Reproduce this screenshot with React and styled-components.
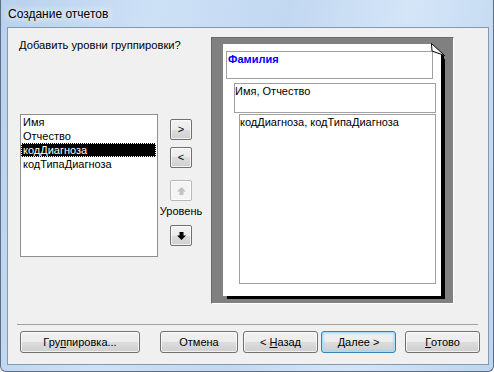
import styled, { createGlobalStyle } from "styled-components";

const GlobalStyle = createGlobalStyle`
  html, body {
    margin: 0;
    padding: 0;
    background: #fff;
  }
  body {
    font-family: "Liberation Sans", Arial, sans-serif;
  }
`;

const Window = styled.div`
  box-sizing: border-box;
  width: 494px;
  height: 372px;
  display: flex;
  flex-direction: column;
  border: 1px solid #5d6d84;
  border-top: none;
  border-radius: 0 0 6px 6px;
  padding: 0 4px 6px 6px;
  background: linear-gradient(
    100deg,
    #b8d1ec 0%,
    #cde1f6 28%,
    #c2d8f1 52%,
    #d4e5f7 74%,
    #bdd5ef 100%
  );
`;

const TitleBar = styled.div`
  height: 27px;
  display: flex;
  align-items: center;
  padding-left: 1px;
  font-size: 12px;
  color: #000;
  text-shadow: 0 0 6px #fff, 0 0 10px #fff;
`;

const Client = styled.div`
  flex: 1;
  display: flex;
  flex-direction: column;
  border: 1px solid #8598b2;
  background: #f0f0f0;
  font-size: 11px;
  line-height: 13px;
  color: #000;
`;

const Body = styled.div`
  display: flex;
  padding-top: 9px;
`;

const LeftColumn = styled.div`
  box-sizing: border-box;
  width: 203px;
  padding-left: 11px;
`;

const Prompt = styled.div`
  margin-top: 2px;
  font-size: 11.2px;
  white-space: nowrap;
`;

const ListRow = styled.div`
  display: flex;
  align-items: flex-start;
  margin-top: 62px;
`;

const ListBox = styled.div`
  box-sizing: border-box;
  width: 138px;
  height: 143px;
  margin-left: 1px;
  border: 1px solid #8e8f8f;
  background: #fff;
`;

const ListItem = styled.div`
  height: 14px;
  line-height: 14px;
  margin-right: 1px;
  padding-left: 2px;
  background: ${(p) => (p.$selected ? "#000" : "transparent")};
  color: ${(p) => (p.$selected ? "#fff" : "#000")};
  outline: ${(p) => (p.$selected ? "1px dotted #fff" : "none")};
  outline-offset: -1px;
`;

const MoveColumn = styled.div`
  width: 44px;
  margin: 5px 0 0 1px;
  display: flex;
  flex-direction: column;
  align-items: center;
`;

const SmallButton = styled.div`
  box-sizing: border-box;
  width: 22px;
  height: 21px;
  margin-top: ${(p) => p.$gap || 0}px;
  display: flex;
  align-items: center;
  justify-content: center;
  border: 1px solid ${(p) => (p.$disabled ? "#b5b9bc" : "#707070")};
  border-radius: 2px;
  background: ${(p) =>
    p.$disabled
      ? "#f4f4f4"
      : "linear-gradient(#f2f2f2 0%, #ebebeb 50%, #dddddd 50%, #cfcfcf 100%)"};
  box-shadow: inset 0 0 0 1px rgba(255, 255, 255, 0.7);
  color: ${(p) => (p.$disabled ? "#bcbcbc" : "#000")};
  font-size: 11px;
`;

const LevelLabel = styled.div`
  margin-top: 4px;
  height: 13px;
  white-space: nowrap;
`;

const Preview = styled.div`
  box-sizing: border-box;
  width: 243px;
  height: 267px;
  background: #808080;
  border-top: 1px solid #696969;
  border-left: 1px solid #696969;
  border-right: 1px solid #ffffff;
  border-bottom: 1px solid #ffffff;
  padding: 6px 0 0 11px;
`;

const Page = styled.div`
  position: relative;
  box-sizing: border-box;
  width: 218px;
  height: 252px;
  background: #fff;
  box-shadow: 4px 3px 0 #000;
  padding: 7px 0 0 0;
`;

const DogEar = styled.svg`
  position: absolute;
  top: -1px;
  right: -5px;
`;

const Band = styled.div`
  box-sizing: border-box;
  margin: ${(p) => p.$top}px 0 0 ${(p) => p.$indent}px;
  width: ${(p) => p.$w}px;
  height: ${(p) => p.$h}px;
  border: 1px solid #a0a0a0;
  padding: 1px ${(p) => (p.$header ? 1 : 0)}px;
  color: ${(p) => (p.$header ? "#0000ff" : "#000")};
  font-weight: ${(p) => (p.$header ? 700 : 400)};
`;

const Separator = styled.div`
  height: 1px;
  margin: 20px 10px 0 9px;
  background: #a0a0a0;
`;

const ButtonRow = styled.div`
  display: flex;
  margin-top: 6px;
  padding-left: 12px;
`;

const Button = styled.div`
  box-sizing: border-box;
  width: ${(p) => p.$w}px;
  height: 22px;
  margin-left: ${(p) => p.$gap || 0}px;
  display: flex;
  align-items: center;
  justify-content: center;
  border: 1px solid ${(p) => (p.$focused ? "#3c7fb1" : "#707070")};
  border-radius: 3px;
  background: linear-gradient(#f2f2f2 0%, #ebebeb 50%, #dddddd 50%, #cfcfcf 100%);
  box-shadow: ${(p) =>
    p.$focused
      ? "inset 0 0 0 1px #a9dcf6, inset 0 0 2px 2px rgba(150, 215, 248, 0.55)"
      : "inset 0 0 0 1px rgba(255, 255, 255, 0.7)"};
  white-space: nowrap;
`;

const Key = styled.span`
  text-decoration: underline;
`;

function Arrow({ down, color }) {
  return (
    <svg width="9" height="8" viewBox="0 0 9 8">
      <path
        d="M4.5 0 L9 4.5 H6.5 V8 H2.5 V4.5 H0 Z"
        fill={color}
        transform={down ? "rotate(180 4.5 4)" : undefined}
      />
    </svg>
  );
}

const fields = ["Имя", "Отчество", "кодДиагноза", "кодТипаДиагноза"];

export default function App() {
  return (
    <>
      <GlobalStyle />
      <Window>
        <TitleBar>Создание отчетов</TitleBar>
        <Client>
          <Body>
            <LeftColumn>
              <Prompt>Добавить уровни группировки?</Prompt>
              <ListRow>
                <ListBox>
                  {fields.map((f) => (
                    <ListItem key={f} $selected={f === "кодДиагноза"}>
                      {f}
                    </ListItem>
                  ))}
                </ListBox>
                <MoveColumn>
                  <SmallButton>&gt;</SmallButton>
                  <SmallButton $gap={7}>&lt;</SmallButton>
                  <SmallButton $gap={12} $disabled>
                    <Arrow color="#c2c2c2" />
                  </SmallButton>
                  <LevelLabel>Уровень</LevelLabel>
                  <SmallButton $gap={7}>
                    <Arrow down color="#000" />
                  </SmallButton>
                </MoveColumn>
              </ListRow>
            </LeftColumn>
            <Preview>
              <Page>
                <DogEar width="19" height="16" viewBox="0 0 19 16">
                  <polygon points="4,0 19,0 19,16 17,16 17,13" fill="#808080" />
                  <polygon
                    points="4.5,0.5 5,8 17.5,12.5"
                    fill="#fff"
                    stroke="#000"
                    strokeWidth="1"
                  />
                </DogEar>
                <Band $header $indent={3} $top={0} $w={207} $h={28}>
                  Фамилия
                </Band>
                <Band $indent={11} $top={4} $w={202} $h={30}>
                  Имя, Отчество
                </Band>
                <Band $indent={16} $top={1} $w={197} $h={170}>
                  кодДиагноза, кодТипаДиагноза
                </Band>
              </Page>
            </Preview>
          </Body>
          <Separator />
          <ButtonRow>
            <Button $w={120}>
              Гру<Key>п</Key>пировка...
            </Button>
            <Button $w={78} $gap={20}>
              Отмена
            </Button>
            <Button $w={75} $gap={5}>
              &lt;&nbsp;<Key>Н</Key>азад
            </Button>
            <Button $w={75} $gap={3} $focused>
              <Key>Д</Key>алее &gt;
            </Button>
            <Button $w={75} $gap={9}>
              <Key>Г</Key>отово
            </Button>
          </ButtonRow>
        </Client>
      </Window>
    </>
  );
}
